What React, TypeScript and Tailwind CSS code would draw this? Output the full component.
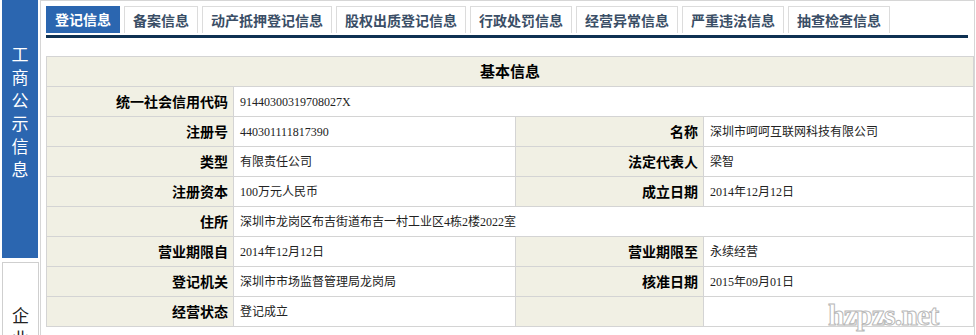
const TABS = ['登记信息', '备案信息', '动产抵押登记信息', '股权出质登记信息', '行政处罚信息', '经营异常信息', '严重违法信息', '抽查检查信息']

type Row = { l1: string; v1: string; l2?: string; v2?: string; span?: boolean }

const ROWS: Row[] = [
  { l1: '统一社会信用代码', v1: '91440300319708027X', span: true },
  { l1: '注册号', v1: '440301111817390', l2: '名称', v2: '深圳市呵呵互联网科技有限公司' },
  { l1: '类型', v1: '有限责任公司', l2: '法定代表人', v2: '梁智' },
  { l1: '注册资本', v1: '100万元人民币', l2: '成立日期', v2: '2014年12月12日' },
  { l1: '住所', v1: '深圳市龙岗区布吉街道布吉一村工业区4栋2楼2022室', span: true },
  { l1: '营业期限自', v1: '2014年12月12日', l2: '营业期限至', v2: '永续经营' },
  { l1: '登记机关', v1: '深圳市市场监督管理局龙岗局', l2: '核准日期', v2: '2015年09月01日' },
  { l1: '经营状态', v1: '登记成立', l2: '', v2: '' },
]

const label = 'h-[30px] border border-[#d4d4d4] bg-[#f1f0e4] pr-[5px] text-right text-[14px] font-bold text-black'
const value = 'h-[30px] border border-[#d4d4d4] bg-white pl-[6px] text-left text-[12px] text-[#222] font-["Liberation_Serif","Noto_Sans_CJK_SC",serif]'

export default function App() {
  return (
    <div className="relative flex h-[335px] w-[976px] overflow-hidden bg-white font-['Noto_Sans_CJK_SC',sans-serif]">
      <div className="w-[40px] shrink-0 pl-[2px]">
        <div className="flex h-[258px] w-[36px] flex-col items-center bg-[#2b66b0] pt-[42px] text-[17px] leading-[23px] text-white">
          {'工商公示信息'.split('').map((c) => <span key={c} className="block h-[23px]">{c}</span>)}
        </div>
        <div className="mt-[4px] flex h-[100px] w-[37px] flex-col items-center border border-[#cfcfcf] bg-white pt-[40px] text-[17px] leading-[23px] text-[#222]">
          <span className="block h-[23px]">企</span>
          <span className="block h-[23px]">业</span>
        </div>
      </div>

      <div className="w-[935px] shrink-0 border-l border-r border-t border-[#d6d6d6] pl-[5px]">
        <div className="flex gap-[4px] pt-[5px]">
          {TABS.map((t, i) => (
            <div
              key={t}
              className={i === 0
                ? 'flex h-[27px] items-center border border-[#2b66b0] bg-[#2b66b0] px-[8px] text-[14px] font-bold text-white'
                : 'flex h-[27px] items-center border border-b-0 border-[#dcdcdc] bg-white px-[8px] text-[14px] font-bold text-[#3a4e66]'}
            >
              {t}
            </div>
          ))}
        </div>
        <div className="mr-[6px] mt-[2px] h-[3px] bg-[#0e3152]" />

        <table className="mt-[18px] w-[928px] table-fixed border-collapse">
          <colgroup>
            <col className="w-[187px]" />
            <col className="w-[282px]" />
            <col className="w-[188px]" />
            <col />
          </colgroup>
          <thead>
            <tr>
              <th colSpan={4} className="h-[30px] border border-[#d4d4d4] bg-[#f1f0e4] text-center text-[15px] font-bold text-black">基本信息</th>
            </tr>
          </thead>
          <tbody>
            {ROWS.map((r) => (
              <tr key={r.l1}>
                <td className={label}>{r.l1}</td>
                {r.span ? (
                  <td colSpan={3} className={value}>{r.v1}</td>
                ) : (
                  <>
                    <td className={value}>{r.v1}</td>
                    <td className={label}>{r.l2}</td>
                    <td className={value}>{r.v2}</td>
                  </>
                )}
              </tr>
            ))}
          </tbody>
        </table>
      </div>

      <div className="absolute left-[828px] top-[300px] font-['Liberation_Serif',serif] text-[30px] font-bold leading-none tracking-[-1px] text-white [-webkit-text-stroke:1px_#b8b8b8]">
        hzpzs.net
      </div>
    </div>
  )
}
